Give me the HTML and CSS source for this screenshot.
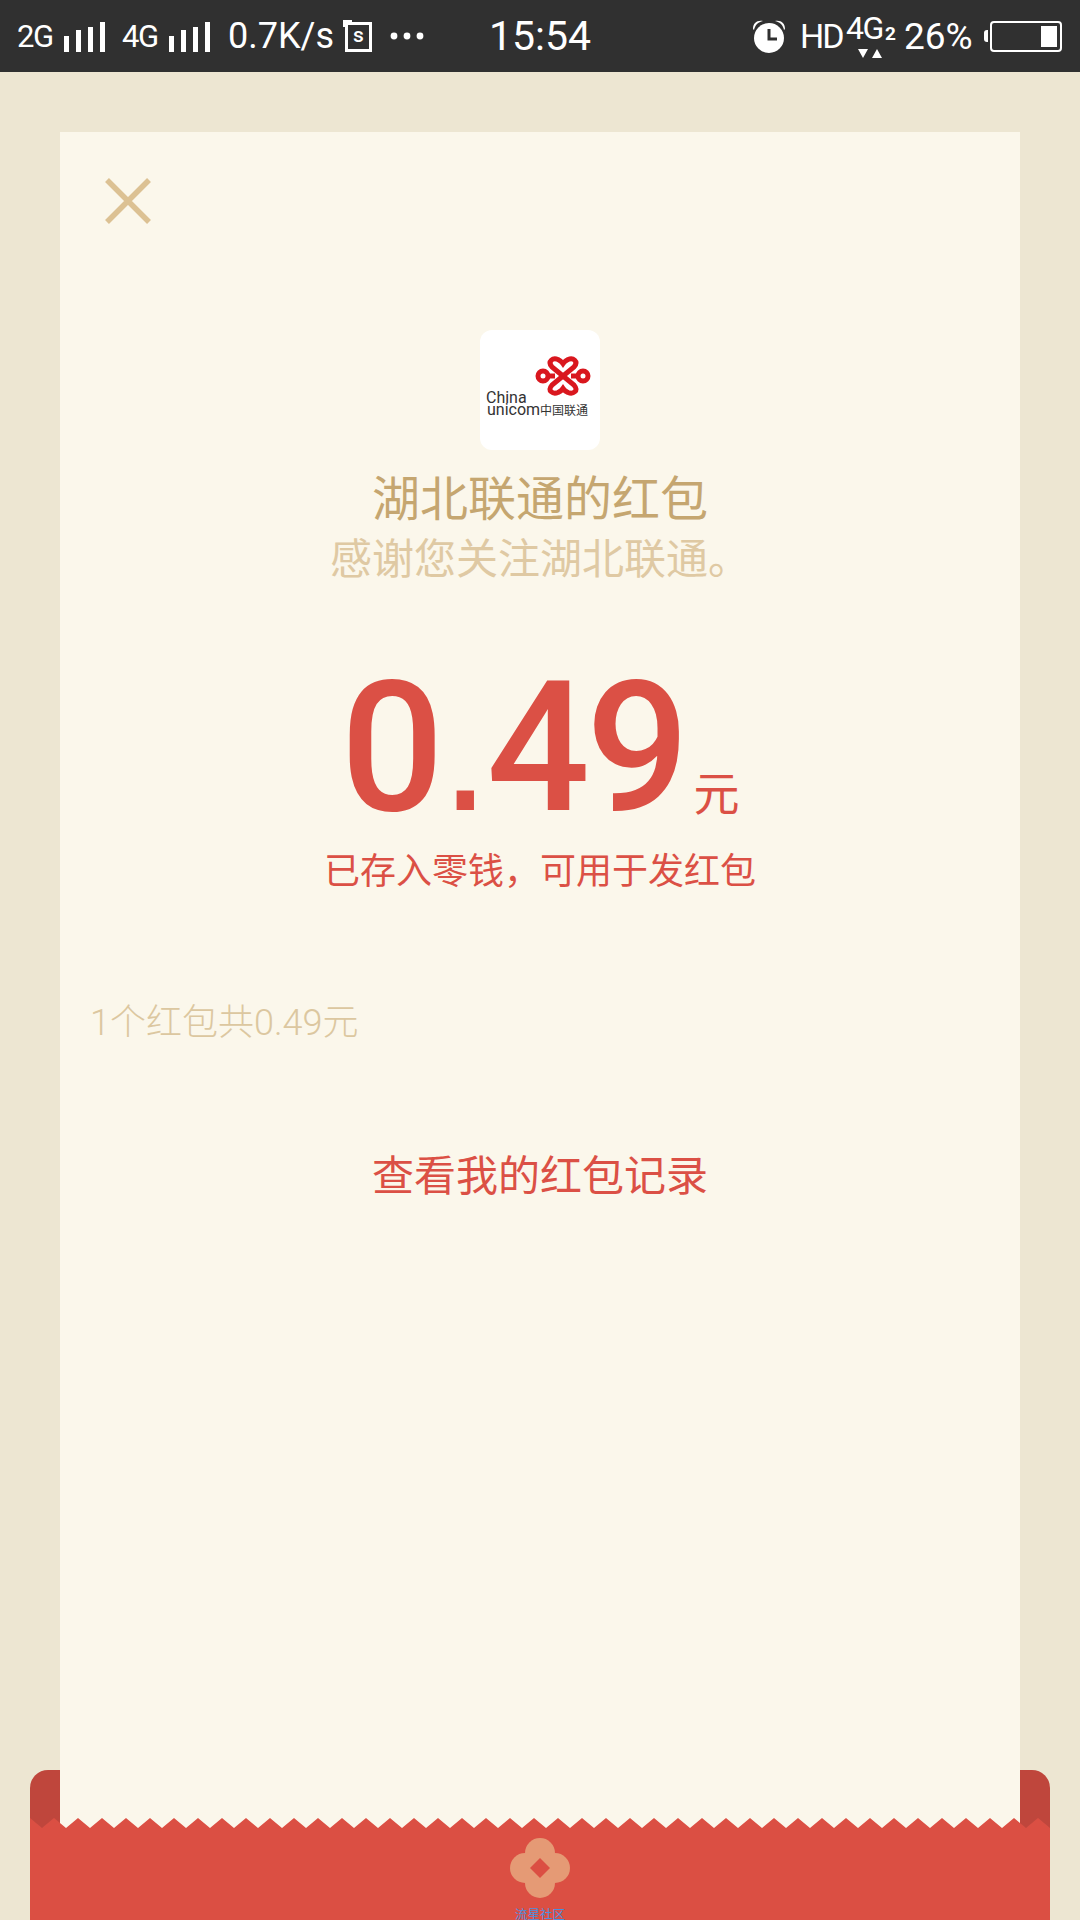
FILE: index.html
```html
<!DOCTYPE html>
<html lang="zh-CN">
<head>
    <meta charset="UTF-8">
    <meta name="viewport" content="width=device-width, initial-scale=1.0">
    <title>红包详情</title>
    <link rel="stylesheet" href="styles.css">
</head>
<body>
    <div class="screen">
        <div class="status-bar">
            <div class="status-left">
                <span class="net">2G</span>
                <svg class="bars" width="41" height="30" viewBox="0 0 41 30"><path fill="#fff" d="M0 14h5v16H0zM12 8h5v22h-5zM24 5h5v25h-5zM36 0h5v30h-5z"/></svg>
                <span class="net net-second">4G</span>
                <svg class="bars" width="41" height="30" viewBox="0 0 41 30"><path fill="#fff" d="M0 14h5v16H0zM12 8h5v22h-5zM24 5h5v25h-5zM36 0h5v30h-5z"/></svg>
                <span class="speed">0.7K/s</span>
                <span class="s-icon">s</span>
                <svg class="dots" width="34" height="8" viewBox="0 0 34 8"><circle cx="4" cy="4" r="3.4" fill="#fff"/><circle cx="17" cy="4" r="3.4" fill="#fff"/><circle cx="30" cy="4" r="3.4" fill="#fff"/></svg>
            </div>
            <span class="clock">15:54</span>
            <div class="status-right">
                <svg class="alarm" width="34" height="33" viewBox="0 0 34 33">
                    <circle cx="17" cy="18" r="15" fill="#fff"/>
                    <path fill="#fff" d="M1 9C1 3 5 0 11 1 6 2 3 5 2 10zM33 9C33 3 29 0 23 1 28 2 31 5 32 10z"/>
                    <path fill="none" stroke="#303030" stroke-width="3" d="M17 9v10h8"/>
                </svg>
                <span class="hd">HD</span>
                <span class="lte">
                    <span class="lte-text">4G</span><b class="lte-sim">2</b>
                    <svg class="lte-arrows" width="24" height="10" viewBox="0 0 24 10"><path fill="#fff" d="M0 0h10L5 9zM14 9h10L19 0z"/></svg>
                </span>
                <span class="percent">26%</span>
                <div class="battery">
                    <span class="battery-nub"></span>
                    <div class="battery-body"><span class="battery-level"></span></div>
                </div>
            </div>
        </div>

        <div class="pocket-back"></div>

        <div class="card">
            <svg class="close" width="46" height="46" viewBox="0 0 46 46"><path fill="none" stroke="#dcc193" stroke-width="5.5" d="M2 2l42 42M44 2L2 44"/></svg>

            <div class="logo">
                <svg width="120" height="120" viewBox="0 0 120 120">
                    <g fill="none" stroke="#d9171e" stroke-width="5">
                        <path d="M83 46L72 37C67 31 73 27.500 78 29.500C80 30.500 82 32 83 33.500C84 32 86 30.500 88 29.500C93 27.500 99 31 94 37Z"/>
                        <path d="M83 46L72 55C67 61 73 64.500 78 62.500C80 61.500 82 60 83 58.500C84 60 86 61.500 88 62.500C93 64.500 99 61 94 55Z"/>
                        <circle cx="63" cy="46" r="5"/>
                        <circle cx="103" cy="46" r="5"/>
                        <path d="M68 46h7M91 46h7"/>
                    </g>
                    <text class="logo-en" x="6" y="72.500">China</text>
                    <text class="logo-en" x="7" y="84.500">unicom</text>
                    <text class="logo-cn" x="60" y="84.500">中国联通</text>
                </svg>
            </div>
            <h1 class="sender">湖北联通的红包</h1>
            <p class="wish">感谢您关注湖北联通。</p>

            <div class="amount">
                <span class="amount-num">0<span class="amount-dot">.</span>49</span><span class="amount-unit">元</span>
            </div>
            <p class="saved">已存入零钱，可用于发红包</p>

            <p class="summary">1个红包共0.49元</p>
            <p class="history">查看我的红包记录</p>
        </div>

        <div class="pocket-front">
            <svg class="zigzag" width="1020" height="102" viewBox="0 0 1020 102">
                <defs>
                    <pattern id="teeth" width="24" height="10" patternUnits="userSpaceOnUse">
                        <path fill="#db4f43" d="M0 0L12 10L24 0V10H0Z"/>
                    </pattern>
                </defs>
                <rect width="1020" height="10" fill="url(#teeth)"/>
                <rect y="10" width="1020" height="92" fill="#db4f43"/>
                <g fill="#e59a75">
                    <circle cx="510" cy="35" r="15"/>
                    <circle cx="510" cy="65" r="15"/>
                    <circle cx="495" cy="50" r="15"/>
                    <circle cx="525" cy="50" r="15"/>
                    <rect x="495" y="35" width="30" height="30"/>
                </g>
                <path fill="#db4f43" d="M510 40l10 10-10 10-10-10z"/>
            </svg>
            <span class="brand">流星社区</span>
        </div>
    </div>
</body>
</html>
```

FILE: styles.css
```css
* {
    box-sizing: border-box;
}
body {
    margin: 0;
    font-family: Roboto, "Noto Sans CJK SC", sans-serif;
}
p, h1 {
    margin: 0;
    font-weight: 400;
}
.screen {
    position: relative;
    width: 1080px;
    height: 1920px;
    overflow: hidden;
    background-color: #ede6d2;
}

/* status bar */
.status-bar {
    display: flex;
    align-items: center;
    height: 72px;
    background-color: #303030;
    color: #fff;
    padding-left: 17px;
}
.status-left {
    display: flex;
    align-items: center;
    width: 473px;
}
.net {
    font-size: 31px;
    letter-spacing: -1.5px;
    width: 36px;
}
.net-second {
    margin-left: 17px;
}
.bars {
    margin-left: 11px;
    margin-top: 1px;
}
.speed {
    font-size: 36px;
    margin-left: 18px;
    width: 106px;
    white-space: nowrap;
}
.s-icon {
    position: relative;
    width: 27px;
    height: 30px;
    margin-left: 11px;
    margin-top: 2px;
    border: 3.5px solid #fff;
    font-size: 21px;
    line-height: 21px;
    font-weight: 500;
    text-align: center;
}
.s-icon::before {
    content: "";
    position: absolute;
    left: -5px;
    top: -5px;
    width: 7px;
    height: 5px;
    border-top: 2px solid #fff;
    border-left: 2px solid #fff;
}
.dots {
    margin-left: 18px;
}
.clock {
    width: 100px;
    font-size: 41px;
    margin-left: -1px;
    margin-right: 1px;
    white-space: nowrap;
}
.status-right {
    display: flex;
    align-items: center;
    margin-left: 162px;
}
.hd {
    font-size: 34px;
    letter-spacing: -2px;
    margin-left: 14px;
    width: 46px;
}
.lte {
    position: relative;
    display: block;
    width: 51px;
    height: 48px;
}
.lte-text {
    position: absolute;
    left: 0;
    top: -3px;
    font-size: 32px;
    letter-spacing: -1.5px;
}
.lte-sim {
    position: absolute;
    left: 39px;
    top: 10px;
    font-size: 19px;
}
.lte-arrows {
    position: absolute;
    left: 12px;
    top: 37px;
}
.percent {
    font-size: 37px;
    margin-left: 7px;
    width: 80px;
    white-space: nowrap;
}
.battery {
    display: flex;
    align-items: center;
}
.battery-nub {
    width: 4px;
    height: 12px;
    background-color: #fff;
    border-radius: 3px 0 0 3px;
    margin-right: 2px;
}
.battery-body {
    display: flex;
    justify-content: flex-end;
    width: 72px;
    height: 31px;
    padding: 3px;
    border: 2px solid #fff;
    border-radius: 4px;
}
.battery-level {
    width: 16px;
    background-color: #fff;
}

/* card */
.card {
    position: relative;
    z-index: 1;
    display: flex;
    flex-direction: column;
    align-items: center;
    width: 960px;
    height: 1698px;
    margin: 60px auto 0;
    background-color: #fbf7eb;
}
.close {
    align-self: flex-start;
    margin: 46px 0 0 45px;
}
.logo {
    width: 120px;
    height: 120px;
    margin-top: 106px;
    background-color: #fff;
    border-radius: 12px;
}
.logo-en {
    font-size: 16px;
    fill: #333;
}
.logo-cn {
    font-size: 12px;
    fill: #333;
}
.sender {
    margin-top: 20px;
    font-size: 48px;
    line-height: 60px;
    color: #c5a670;
}
.wish {
    font-size: 42px;
    line-height: 60px;
    color: #dfc9a3;
}
.amount {
    display: flex;
    align-items: baseline;
    margin-top: 106px;
    color: #db5045;
    line-height: 102px;
}
.amount-num {
    font-size: 182px;
    font-weight: 500;
    letter-spacing: -4px;
}
.amount-dot {
    font-family: "Liberation Sans", sans-serif;
}
.amount-unit {
    margin-left: 8px;
    font-size: 46px;
}
.saved {
    font-size: 36px;
    line-height: 54px;
    color: #db5045;
}
.summary {
    align-self: flex-start;
    margin: 97px 0 0 30px;
    font-size: 36px;
    font-weight: 300;
    line-height: 54px;
    color: #dcc7a0;
}
.history {
    margin-top: 97px;
    font-size: 42px;
    line-height: 60px;
    color: #db5045;
}

/* red pocket */
.pocket-back {
    position: absolute;
    left: 30px;
    top: 1770px;
    width: 1020px;
    height: 150px;
    background-color: #bf463c;
    border-radius: 18px 18px 0 0;
}
.pocket-front {
    position: absolute;
    z-index: 2;
    left: 30px;
    top: 1818px;
    width: 1020px;
    height: 102px;
}
.zigzag {
    display: block;
}
.brand {
    position: absolute;
    left: 485px;
    top: 88px;
    width: 50px;
    font-size: 12.500px;
    line-height: 18px;
    white-space: nowrap;
    color: #4a90e0;
}
```
